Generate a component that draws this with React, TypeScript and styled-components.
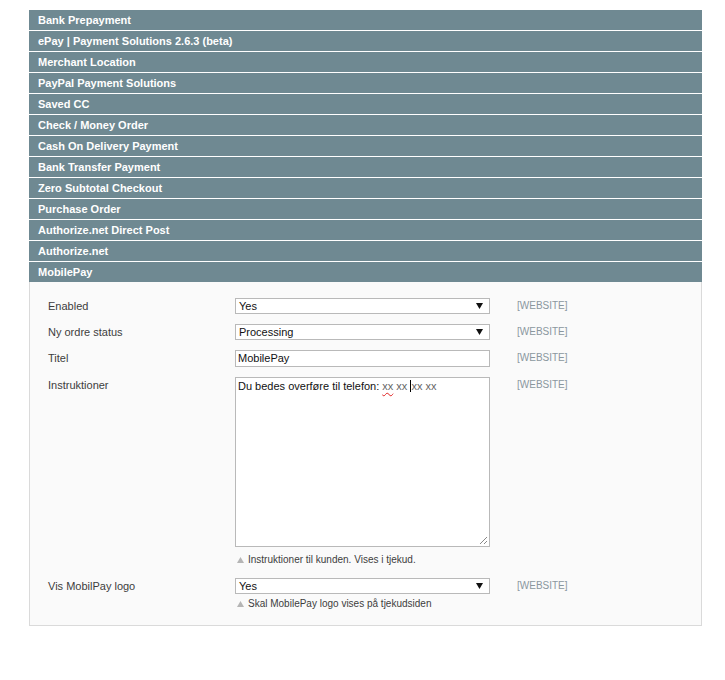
import React from 'react';
import styled, { createGlobalStyle } from 'styled-components';

const GlobalStyle = createGlobalStyle`
  body {
    margin: 0;
    background: #fff;
    font-family: Arial, "Liberation Sans", sans-serif;
    font-size: 11px;
    color: #2f2f2f;
  }
`;

const Sections = [
  'Bank Prepayment',
  'ePay | Payment Solutions 2.6.3 (beta)',
  'Merchant Location',
  'PayPal Payment Solutions',
  'Saved CC',
  'Check / Money Order',
  'Cash On Delivery Payment',
  'Bank Transfer Payment',
  'Zero Subtotal Checkout',
  'Purchase Order',
  'Authorize.net Direct Post',
  'Authorize.net',
];

const Page = styled.div`
  width: 673px;
  margin: 10px 0 0 29px;
`;

const SectionHead = styled.div<{ $open?: boolean }>`
  height: 20px;
  line-height: 20px;
  padding: 0 9px;
  margin-bottom: ${(p) => (p.$open ? 0 : 1)}px;
  background: #6f8992;
  color: #fff;
  font-weight: bold;
  font-size: 11px;
`;

const Panel = styled.div`
  background: #fafafa;
  border: 1px solid #dadada;
  border-top: 0;
  padding: 16px 0 14px 18px;
`;

const FieldGrid = styled.div`
  display: grid;
  grid-template-columns: 187px 255px auto;
`;

const Label = styled.div`
  line-height: 16px;
  color: #3d3d3d;
  font-size: 11px;
`;

const Value = styled.div<{ $gap: number }>`
  padding-bottom: ${(p) => p.$gap}px;
`;

const Scope = styled.div`
  padding-left: 27px;
  line-height: 16px;
  font-size: 10px;
  color: #8a979e;
`;

const SelectBox = styled.div`
  box-sizing: border-box;
  height: 16px;
  border: 1px solid #b9b9b9;
  background: #fff;
  display: flex;
  align-items: center;
  justify-content: space-between;
  padding: 0 6px 0 3px;
  color: #111;
  font-size: 11px;
`;

const InputBox = styled.div`
  box-sizing: border-box;
  height: 17px;
  border: 1px solid #b9b9b9;
  background: #fff;
  line-height: 15px;
  padding: 0 2px;
  color: #111;
`;

const TextBox = styled.div`
  position: relative;
  box-sizing: border-box;
  height: 170px;
  border: 1px solid #b9b9b9;
  background: #fff;
  padding: 1px 2px;
  line-height: 14px;
  color: #111;
`;

const Misspelled = styled.span`
  color: #666;
  text-decoration: underline wavy #e02020;
  text-decoration-thickness: 1px;
  text-underline-offset: 2px;
`;

const Faint = styled.span`
  color: #666;
`;

const Caret = styled.span`
  display: inline-block;
  width: 1px;
  height: 12px;
  background: #000;
  vertical-align: -2px;
`;

const Grip = styled.svg`
  position: absolute;
  right: 1px;
  bottom: 1px;
`;

const Hint = styled.div<{ $top: number }>`
  display: flex;
  align-items: center;
  gap: 4px;
  margin-top: ${(p) => p.$top}px;
  padding-left: 2px;
  line-height: 14px;
  font-size: 10px;
  color: #3d3d3d;
`;

const Arrow = () => (
  <svg width="7" height="6" viewBox="0 0 7 6">
    <polygon points="0,0 7,0 3.5,6" fill="#111" />
  </svg>
);

const HintMark = () => (
  <svg width="7" height="6" viewBox="0 0 7 6">
    <polygon points="0,6 7,6 3.5,0" fill="#b5b5b5" />
  </svg>
);

function Select({ value }: { value: string }) {
  return (
    <SelectBox>
      <span>{value}</span>
      <Arrow />
    </SelectBox>
  );
}

export default function App() {
  return (
    <>
      <GlobalStyle />
      <Page>
        {Sections.map((title) => (
          <SectionHead key={title}>{title}</SectionHead>
        ))}
        <SectionHead $open>MobilePay</SectionHead>
        <Panel>
          <FieldGrid>
            <Label>Enabled</Label>
            <Value $gap={10}>
              <Select value="Yes" />
            </Value>
            <Scope>[WEBSITE]</Scope>

            <Label>Ny ordre status</Label>
            <Value $gap={10}>
              <Select value="Processing" />
            </Value>
            <Scope>[WEBSITE]</Scope>

            <Label>Titel</Label>
            <Value $gap={10}>
              <InputBox>MobilePay</InputBox>
            </Value>
            <Scope>[WEBSITE]</Scope>

            <Label>Instruktioner</Label>
            <Value $gap={11}>
              <TextBox>
                Du bedes overføre til telefon: <Misspelled>xx</Misspelled> <Faint>xx </Faint>
                <Caret />
                <Faint>xx xx</Faint>
                <Grip width="9" height="9" viewBox="0 0 9 9">
                  <line x1="1" y1="8" x2="8" y2="1" stroke="#888" strokeWidth="1" />
                  <line x1="5" y1="8" x2="8" y2="5" stroke="#888" strokeWidth="1" />
                </Grip>
              </TextBox>
              <Hint $top={6}>
                <HintMark />
                Instruktioner til kunden. Vises i tjekud.
              </Hint>
            </Value>
            <Scope>[WEBSITE]</Scope>

            <Label>Vis MobilPay logo</Label>
            <Value $gap={0}>
              <Select value="Yes" />
              <Hint $top={3}>
                <HintMark />
                Skal MobilePay logo vises på tjekudsiden
              </Hint>
            </Value>
            <Scope>[WEBSITE]</Scope>
          </FieldGrid>
        </Panel>
      </Page>
    </>
  );
}
